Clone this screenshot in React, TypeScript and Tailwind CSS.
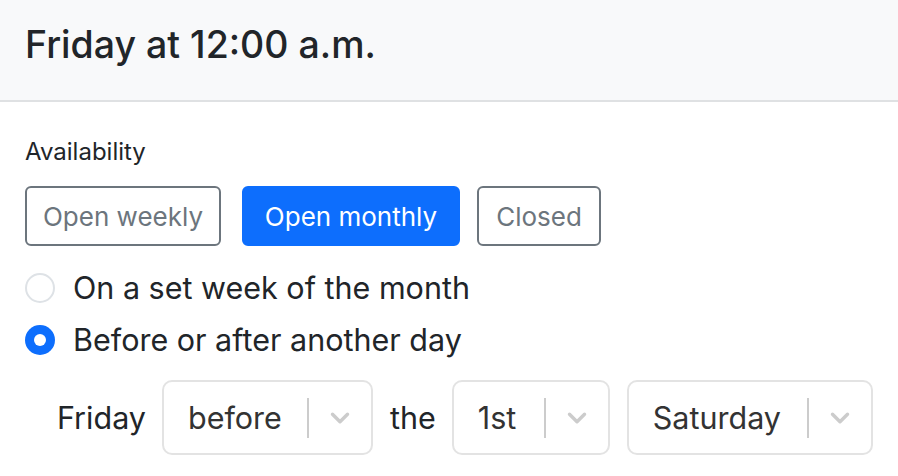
import { ChevronDown } from 'lucide-react';

const font = { fontFamily: 'Inter, "Noto Sans", sans-serif' };

const Select = ({ value, width }: { value: string; width: string }) => (
  <div className={`flex h-[75px] items-center rounded-[10px] border-2 border-[#e3e3e3] bg-white ${width}`}>
    <span className="flex-1 pl-[24px] text-[30.5px] text-[#333333]">{value}</span>
    <span className="h-[40px] w-[2px] bg-[#cccccc]" />
    <span className="flex w-[62px] items-center justify-center text-[#cccccc]">
      <ChevronDown size={30} strokeWidth={2.75} />
    </span>
  </div>
);

export default function App() {
  return (
    <div className="min-h-[476px] w-[898px] bg-white text-[#212529]" style={font}>
      {/* card header */}
      <div className="flex h-[102px] items-center border-b-2 border-[#dfe1e3] bg-[#f8f9fa] px-[25px] pb-[10px]">
        <h5 className="text-[37.5px] font-medium">Friday at 12:00 a.m.</h5>
      </div>

      <div className="px-[25px] pt-[34px]">
        <div className="text-[24px] leading-[32px]">Availability</div>

        <div className="mt-[18px] flex">
          <button className="h-[60px] w-[196px] rounded-[6px] border-2 border-[#6c757d] text-[26px] text-[#6c757d]">
            Open weekly
          </button>
          <button className="ml-[21px] h-[60px] w-[218px] rounded-[6px] border-2 border-[#0d6efd] bg-[#0d6efd] text-[26px] text-white">
            Open monthly
          </button>
          <button className="ml-[17px] h-[60px] w-[124px] rounded-[6px] border-2 border-[#6c757d] text-[26px] text-[#6c757d]">
            Closed
          </button>
        </div>

        <div className="mt-[16px] flex flex-col">
          <label className="flex h-[52px] items-center gap-[18px] text-[30.5px]">
            <span className="h-[30px] w-[30px] rounded-full border-2 border-[#dee2e6] bg-white" />
            On a set week of the month
          </label>
          <label className="flex h-[52px] items-center gap-[18px] text-[30.5px]">
            <span className="flex h-[30px] w-[30px] items-center justify-center rounded-full bg-[#0d6efd]">
              <span className="h-[12px] w-[12px] rounded-full bg-white" />
            </span>
            Before or after another day
          </label>
        </div>

        <div className="mt-[14px] flex items-center pl-[32px] text-[30.5px]">
          <span>Friday</span>
          <div className="ml-[16px]">
            <Select value="before" width="w-[211px]" />
          </div>
          <span className="ml-[17px]">the</span>
          <div className="ml-[16px]">
            <Select value="1st" width="w-[158px]" />
          </div>
          <div className="ml-[17px]">
            <Select value="Saturday" width="w-[246px]" />
          </div>
        </div>
      </div>
    </div>
  );
}
